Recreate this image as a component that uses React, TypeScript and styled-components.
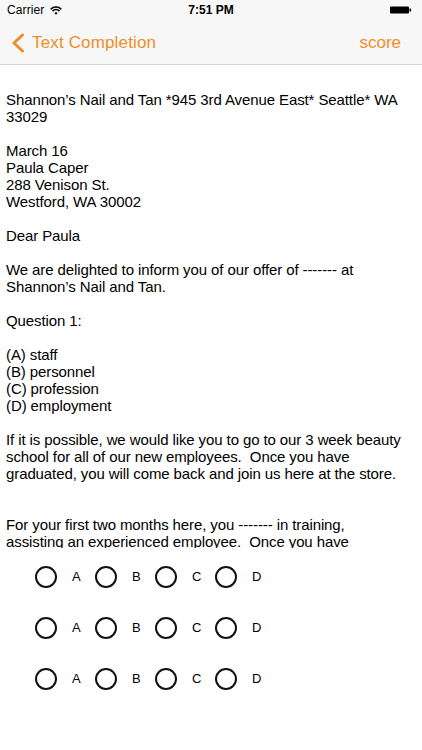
import React from 'react';
import styled, { createGlobalStyle } from 'styled-components';

const ORANGE = '#f08d2b';

const paragraphs: { lines: string[]; gap?: number }[] = [
  { lines: ['Shannon\u2019s Nail and Tan *945 3rd Avenue East* Seattle* WA', '33029'] },
  { lines: ['March 16', 'Paula Caper', '288 Venison St.', 'Westford, WA 30002'] },
  { lines: ['Dear Paula'] },
  { lines: ['We are delighted to inform you of our offer of ------- at', 'Shannon\u2019s Nail and Tan.'] },
  { lines: ['Question 1:'] },
  { lines: ['(A) staff', '(B) personnel', '(C) profession', '(D) employment'] },
  {
    lines: [
      'If it is possible, we would like you to go to our 3 week beauty',
      'school for all of our new employees.  Once you have',
      'graduated, you will come back and join us here at the store.'
    ],
    gap: 34
  },
  {
    lines: [
      'For your first two months here, you ------- in training,',
      'assisting an experienced employee.  Once you have'
    ]
  }
];

const letters = ['A', 'B', 'C', 'D'];

const App = () => {
  return (
    <>
      <GlobalStyle />
      <Screen>
        <StatusBar>
          <Carrier>
            Carrier
            <svg width="12" height="9" viewBox="0 0 12 9">
              <path d="M0.6 3.2 A8 8 0 0 1 11.4 3.2" fill="none" stroke="#000" strokeWidth="1.5" />
              <path d="M2.5 5.1 A5.3 5.3 0 0 1 9.5 5.1" fill="none" stroke="#000" strokeWidth="1.5" />
              <path d="M4.4 7 L6 8.8 L7.6 7 A2.4 2.4 0 0 0 4.4 7 Z" fill="#000" />
            </svg>
          </Carrier>
          <Clock>7:51 PM</Clock>
          <Battery>
            <svg width="22" height="8" viewBox="0 0 22 8">
              <rect x="0" y="0.5" width="19" height="7" rx="1" fill="#000" />
              <rect x="19.5" y="2.5" width="1.6" height="3" rx="0.5" fill="#000" />
            </svg>
          </Battery>
        </StatusBar>
        <NavBar>
          <BackButton>
            <svg width="14" height="20" viewBox="0 0 14 20">
              <path d="M11.5 2 L3 10 L11.5 18" fill="none" stroke={ORANGE} strokeWidth="3" strokeLinecap="round" strokeLinejoin="round" />
            </svg>
            <NavTitle>Text Completion</NavTitle>
          </BackButton>
          <NavAction>score</NavAction>
        </NavBar>
        <Passage>
          {paragraphs.map((p, i) => (
            <Paragraph key={i} $gap={p.gap ?? 17}>
              {p.lines.map((line, j) => (
                <Line key={j}>{line}</Line>
              ))}
            </Paragraph>
          ))}
        </Passage>
        <Answers>
          {[0, 1, 2].map(row => (
            <AnswerRow key={row}>
              {letters.map(letter => (
                <Option key={letter}>
                  <Radio />
                  <OptionLabel>{letter}</OptionLabel>
                </Option>
              ))}
            </AnswerRow>
          ))}
        </Answers>
      </Screen>
    </>
  );
};

export default App;

const GlobalStyle = createGlobalStyle`
  html, body {
    margin: 0;
    padding: 0;
    background: #ffffff;
  }
  body {
    font-family: "Liberation Sans", Arial, sans-serif;
    color: #000;
  }
`;

const Screen = styled.div`
  width: 422px;
  height: 750px;
  display: flex;
  flex-direction: column;
  background: #fff;
  overflow: hidden;
`;

const StatusBar = styled.div`
  height: 20px;
  background: #f7f7f7;
  display: grid;
  grid-template-columns: 1fr auto 1fr;
  align-items: center;
  padding: 0 7px;
  font-size: 12px;
`;

const Carrier = styled.div`
  display: flex;
  align-items: center;
  gap: 6px;
  letter-spacing: 0.1px;
`;

const Clock = styled.div`
  font-weight: 700;
`;

const Battery = styled.div`
  display: flex;
  justify-content: flex-end;
  padding-right: 3px;
`;

const NavBar = styled.div`
  height: 45px;
  box-sizing: border-box;
  background: #f7f7f7;
  border-bottom: 1px solid #d4d4d4;
  display: flex;
  align-items: center;
  justify-content: space-between;
  padding: 2px 21px 0 11px;
  color: ${ORANGE};
  font-size: 17px;
`;

const BackButton = styled.div`
  display: flex;
  align-items: center;
  gap: 7px;
`;

const NavTitle = styled.span`
  letter-spacing: 0.15px;
`;

const NavAction = styled.span``;

const Passage = styled.div`
  height: 483px;
  flex-shrink: 0;
  overflow: hidden;
  box-sizing: border-box;
  padding: 26px 6px 0;
  font-size: 15px;
  line-height: 17px;
  letter-spacing: -0.1px;
`;

const Paragraph = styled.div<{ $gap: number }>`
  margin-bottom: ${p => p.$gap}px;
`;

const Line = styled.div`
  white-space: pre;
`;

const Answers = styled.div`
  padding: 3px 0 0 35px;
`;

const AnswerRow = styled.div`
  height: 51px;
  display: flex;
  align-items: center;
`;

const Option = styled.div`
  width: 60px;
  display: flex;
  align-items: center;
`;

const Radio = styled.div`
  width: 22px;
  height: 22px;
  box-sizing: border-box;
  border: 2px solid #111;
  border-radius: 50%;
`;

const OptionLabel = styled.span`
  margin-left: 15px;
  font-size: 13px;
`;
